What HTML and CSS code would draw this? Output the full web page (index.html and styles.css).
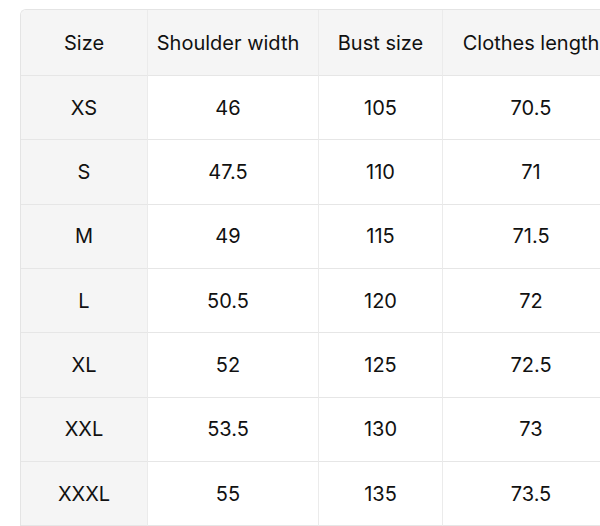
FILE: index.html
```html
<!DOCTYPE html>
<html lang="en">
<head>
<meta charset="utf-8">
<link rel="stylesheet" href="styles.css">
</head>
<body>
<div class="wrap">
<table class="size-table">
  <colgroup>
    <col class="c1"><col class="c2"><col class="c3"><col class="c4">
  </colgroup>
  <thead>
    <tr><th>Size</th><th class="shift">Shoulder width</th><th>Bust size</th><th>Clothes length</th></tr>
  </thead>
  <tbody>
    <tr><th>XS</th><td class="shift">46</td><td>105</td><td>70.5</td></tr>
    <tr><th>S</th><td class="shift">47.5</td><td>110</td><td>71</td></tr>
    <tr><th>M</th><td class="shift">49</td><td>115</td><td>71.5</td></tr>
    <tr><th>L</th><td class="shift">50.5</td><td>120</td><td>72</td></tr>
    <tr><th>XL</th><td class="shift">52</td><td>125</td><td>72.5</td></tr>
    <tr><th>XXL</th><td class="shift">53.5</td><td>130</td><td>73</td></tr>
    <tr><th>XXXL</th><td class="shift">55</td><td>135</td><td>73.5</td></tr>
  </tbody>
</table>
</div>
</body>
</html>
```
FILE: styles.css
```css
html, body {
  margin: 0;
  padding: 0;
  background: #ffffff;
  overflow: hidden;
}
.wrap {
  padding: 9px 0 0 20px;
  width: 600px;
}
.size-table {
  border-collapse: separate;
  border-spacing: 0;
  table-layout: fixed;
  width: 599px;
  font-family: Inter, "Noto Sans", sans-serif;
  font-size: 20px;
  color: #111111;
  border-top: 1px solid #e4e4e4;
  border-left: 1px solid #e4e4e4;
  border-top-left-radius: 6px;
  overflow: hidden;
}
.c1 { width: 127px; }
.c2 { width: 171px; }
.c3 { width: 124px; }
.c4 { width: 177px; }
.size-table th,
.size-table td {
  font-weight: 400;
  text-align: center;
  vertical-align: middle;
  padding: 0;
  white-space: nowrap;
  border-right: 1px solid #ebebeb;
  border-bottom: 1px solid #e6e6e6;
  height: 63.33px;
}
.size-table .shift {
  padding-right: 10px;
}
.size-table thead th {
  background: #f5f5f5;
  height: 65px;
}
.size-table tbody th {
  background: #f5f5f5;
}
.size-table td {
  background: #ffffff;
}
```
